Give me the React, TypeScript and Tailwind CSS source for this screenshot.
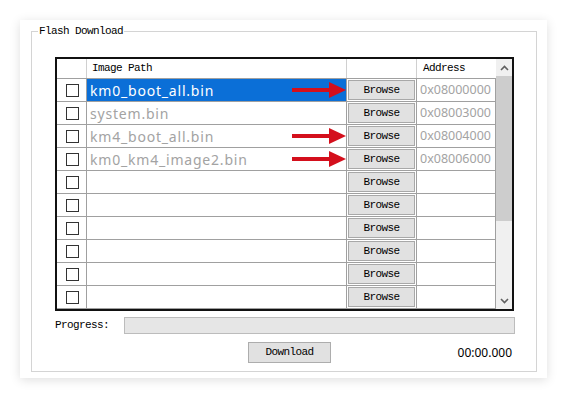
import { FC } from "react";

const mono = "font-['Liberation_Mono',monospace] text-[11px] tracking-[-0.6px] text-black";
const sans = "font-['Noto_Sans','Liberation_Sans',sans-serif]";

interface IRow {
  path: string;
  address: string;
  arrow: boolean;
}

const rows: IRow[] = [
  { path: "km0_boot_all.bin", address: "0x08000000", arrow: true },
  { path: "system.bin", address: "0x08003000", arrow: false },
  { path: "km4_boot_all.bin", address: "0x08004000", arrow: true },
  { path: "km0_km4_image2.bin", address: "0x08006000", arrow: true },
  { path: "", address: "", arrow: false },
  { path: "", address: "", arrow: false },
  { path: "", address: "", arrow: false },
  { path: "", address: "", arrow: false },
  { path: "", address: "", arrow: false },
  { path: "", address: "", arrow: false },
];

const RedArrow: FC = () => (
  <svg width="54" height="16" viewBox="0 0 54 16" className="absolute right-0 top-[3px]">
    <rect x="0" y="6" width="38" height="4" fill="#d40f1c" />
    <polygon points="37,0 54,8 37,16" fill="#d40f1c" />
  </svg>
);

const Chevron: FC<{ up?: boolean }> = ({ up }) => (
  <svg width="9" height="6" viewBox="0 0 9 6">
    <path d={up ? "M1 5 L4.5 1.5 L8 5" : "M1 1 L4.5 4.5 L8 1"} stroke="#606060" strokeWidth="1.6" fill="none" />
  </svg>
);

const TableRow: FC<{ row: IRow; selected: boolean }> = ({ row, selected }) => (
  <div className="flex h-[23px] shrink-0 border-b border-[#a0a0a0]">
    <div className="flex w-[30px] items-center justify-center border-r border-[#a0a0a0]">
      <div className="ml-[1px] h-[13px] w-[13px] border border-[#333] bg-white" />
    </div>
    <div
      className={`relative flex w-[260px] items-center border-r border-[#a0a0a0] pl-[3px] ${sans} text-[14px] tracking-[0.8px] ${
        selected ? "bg-[#0b6fd7] text-white" : "text-[#a3a3a3]"
      }`}
    >
      {row.path}
      {row.arrow && <RedArrow />}
    </div>
    <div className="flex w-[70px] items-center justify-center border-r border-[#a0a0a0] p-[1px]">
      <div className={`flex h-full w-full items-center justify-center border border-[#a8a8a8] bg-[#e1e1e1] ${mono}`}>
        Browse
      </div>
    </div>
    <div className={`flex w-[79px] items-center border-r border-[#a0a0a0] pl-[3px] ${sans} text-[12.5px] text-[#a3a3a3]`}>
      {row.address}
    </div>
  </div>
);

const App: FC = () => {
  return (
    <div className="h-[398px] w-[567px] bg-white pl-[20px] pt-[20px]">
      <div className="h-[358px] w-[527px] bg-white p-[11px] shadow-[0_2px_10px_rgba(0,0,0,0.13)]">
        <div className="relative h-[341px] w-[506px] border border-[#d4d4d4]">
          <span className={`absolute left-[6px] top-[-7px] bg-white px-[1px] leading-[12px] ${mono}`}>
            Flash Download
          </span>

          <div className="ml-[23px] mt-[25px] flex h-[254px] w-[459px] border-2 border-[#111] bg-white">
            <div className="flex w-[439px] flex-col overflow-hidden">
              <div className="flex h-[20px] shrink-0 border-b border-[#a0a0a0]">
                <div className="w-[30px] border-r border-[#d0d0d0]" />
                <div className={`flex w-[260px] items-center border-r border-[#d0d0d0] pl-[5px] ${mono}`}>
                  Image Path
                </div>
                <div className="w-[70px] border-r border-[#d0d0d0]" />
                <div className={`flex w-[79px] items-center pl-[6px] ${mono}`}>Address</div>
              </div>
              {rows.map((row, i) => (
                <TableRow key={i} row={row} selected={i === 0} />
              ))}
              <div className="flex h-[4px] shrink-0">
                <div className="w-[30px] border-r border-[#a0a0a0]" />
                <div className="w-[260px] border-r border-[#a0a0a0]" />
                <div className="w-[70px] border-r border-[#a0a0a0]" />
                <div className="w-[79px] border-r border-[#a0a0a0]" />
              </div>
            </div>
            <div className="flex w-[16px] flex-col bg-[#f0f0f0]">
              <div className="flex h-[17px] items-center justify-center">
                <Chevron up />
              </div>
              <div className="h-[145px] bg-[#cdcdcd]" />
              <div className="flex-1" />
              <div className="flex h-[17px] items-center justify-center">
                <Chevron />
              </div>
            </div>
          </div>

          <div className="ml-[23px] mt-[6px] flex h-[17px] items-center">
            <span className={`w-[69px] ${mono}`}>Progress:</span>
            <div className="h-[17px] w-[391px] border border-[#bcbcbc] bg-[#e6e6e6]" />
          </div>

          <div className="mt-[8px] flex h-[21px] items-center">
            <div className="ml-[216px] flex h-[21px] w-[83px] items-center justify-center border border-[#adadad] bg-[#e1e1e1]">
              <span className={mono}>Download</span>
            </div>
            <span className={`ml-auto mr-[24px] ${sans} text-[12px] text-black`}>00:00.000</span>
          </div>
        </div>
      </div>
    </div>
  );
};

export default App;
